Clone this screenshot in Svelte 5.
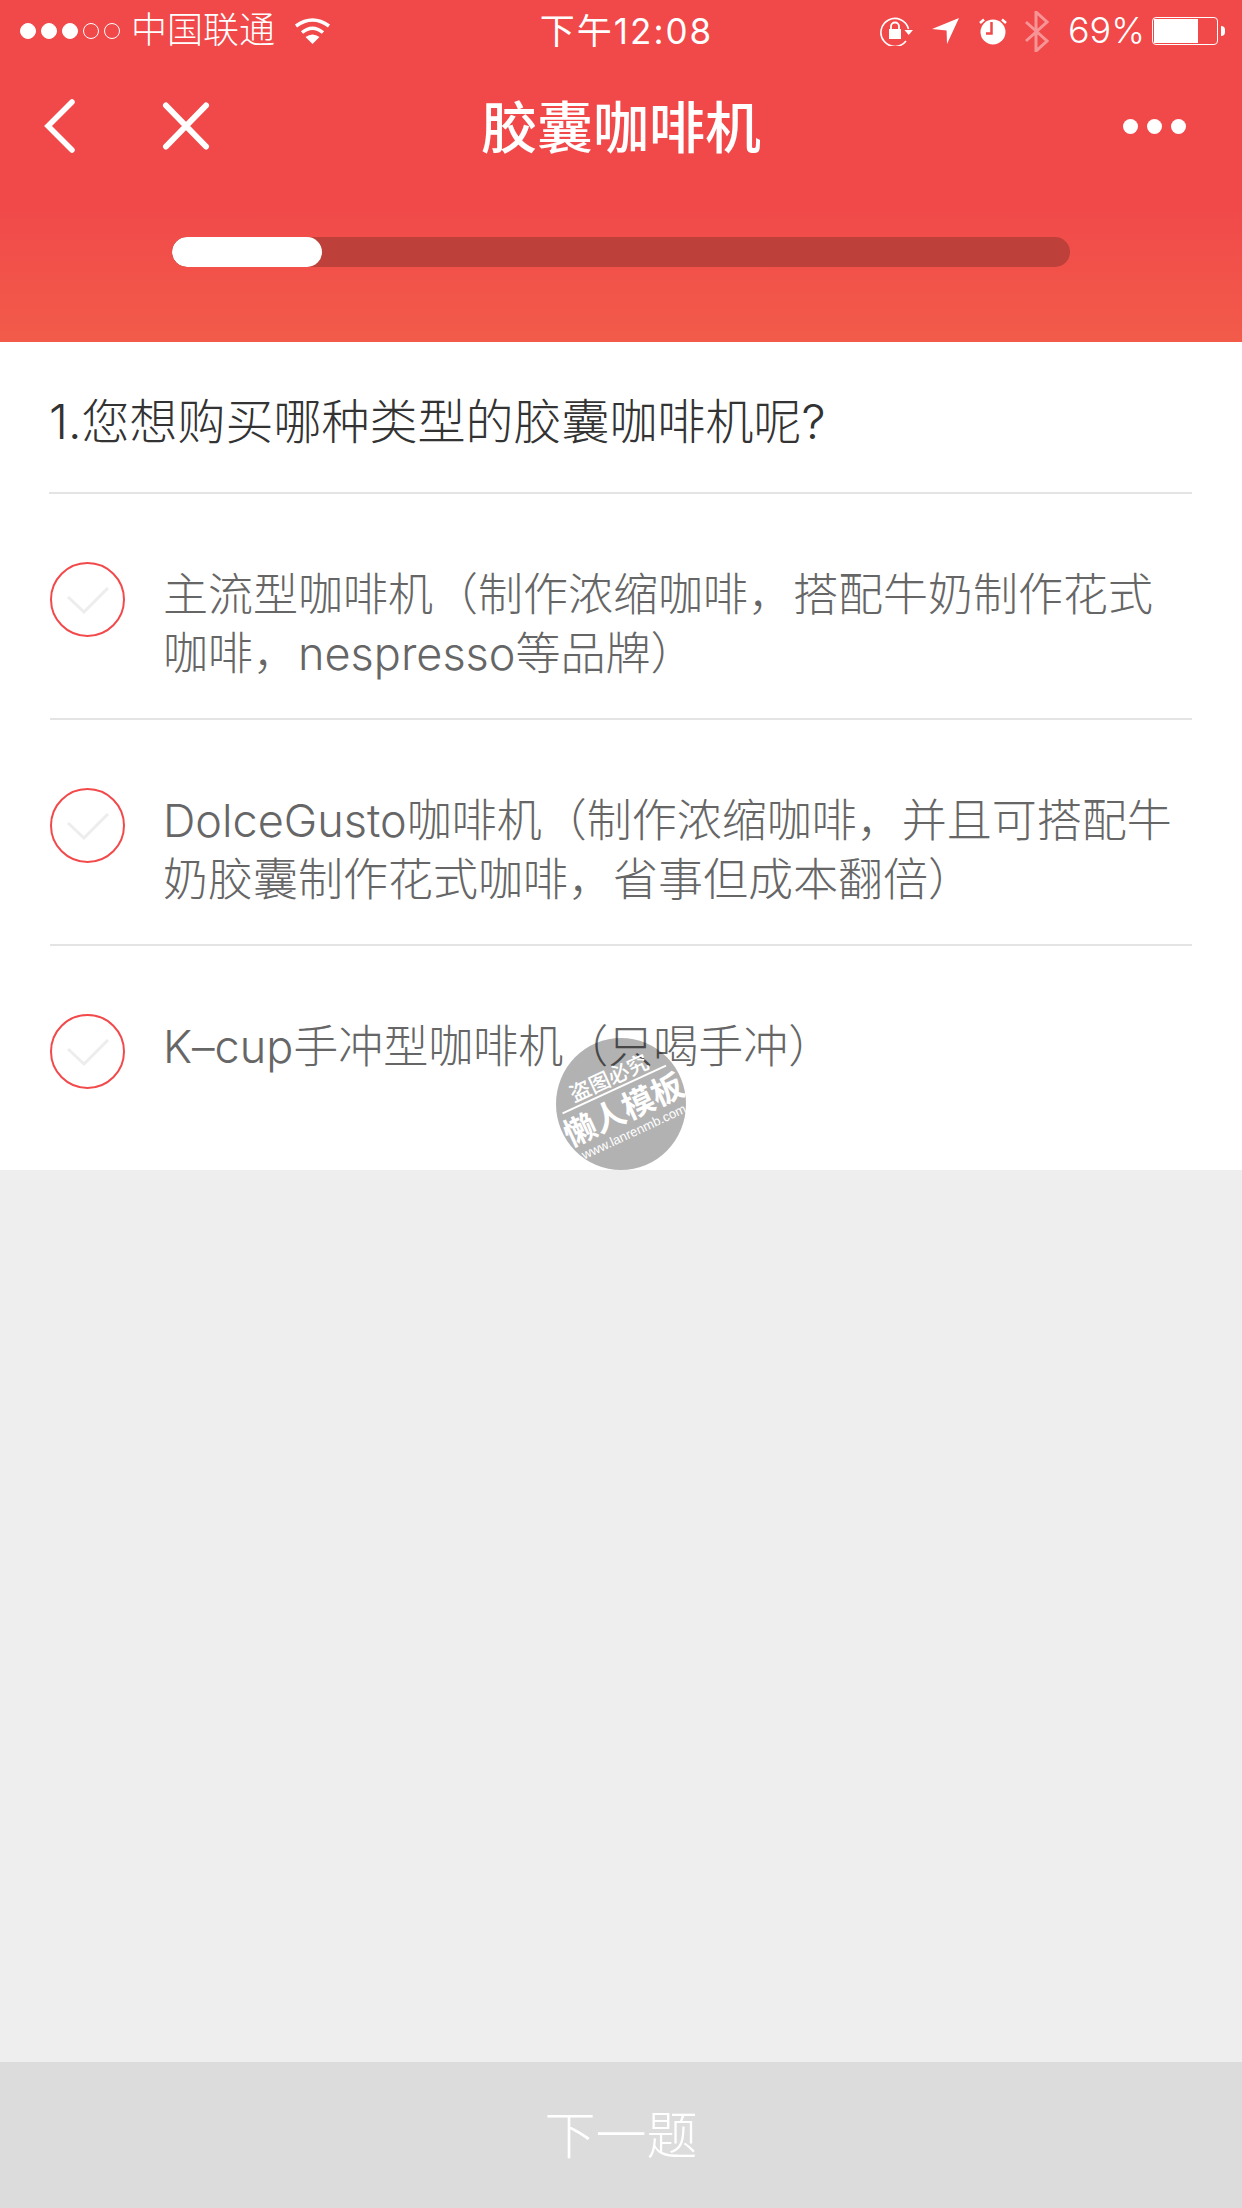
<script>
  const options = [
    '主流型咖啡机（制作浓缩咖啡，搭配牛奶制作花式咖啡，nespresso等品牌）',
    'DolceGusto咖啡机（制作浓缩咖啡，并且可搭配牛奶胶囊制作花式咖啡，省事但成本翻倍）',
    'K–cup手冲型咖啡机（只喝手冲）'
  ];
  const progress = 16.7;
</script>

<div class="page">
  <header class="top">
    <div class="status">
      <div class="carrier">
        <span class="signal">
          <i class="on"></i><i class="on"></i><i class="on"></i><i></i><i></i>
        </span>
        <span class="carrier-name">中国联通</span>
        <svg class="wifi" width="37" height="27" viewBox="0 0 37 27">
          <path d="M2 9Q18.500 -3 35 9" fill="none" stroke="#fff" stroke-width="3.500" />
          <path d="M8 15.500Q18.500 7 29 15.500" fill="none" stroke="#fff" stroke-width="3.500" />
          <path d="M18.500 27L11.500 20Q18.500 15 25.500 20Z" fill="#fff" />
        </svg>
      </div>
      <div class="clock">下午12:08</div>
      <div class="sys">
        <svg width="33" height="30" viewBox="0 0 33 30">
          <path d="M28.500 13A14 14 0 1 0 26 25" fill="none" stroke="#fff" stroke-width="1.600" />
          <path d="M24.500 14H33L28.700 19Z" fill="#fff" />
          <rect x="9" y="13" width="12" height="10" fill="#fff" />
          <path d="M11 14V10.500a4 4 0 0 1 8 0V14" fill="none" stroke="#fff" stroke-width="1.800" />
        </svg>
        <svg class="gap" width="27" height="26" viewBox="0 0 27 26">
          <path d="M0 11L27 0L15 26L14.600 12.500Z" fill="#fff" />
        </svg>
        <svg class="gap" width="29" height="27" viewBox="0 0 29 27">
          <circle cx="15" cy="14" r="12.500" fill="#fff" />
          <path d="M2 5L6 1.500M28 5L24 1.500" stroke="#fff" stroke-width="2.500" />
          <path d="M13.500 4V15.500H8" fill="none" stroke="#f1484a" stroke-width="2.500" />
        </svg>
        <svg class="gap-bt" width="24" height="41" viewBox="0 0 24 41">
          <path d="M1 11L22 30L11 40V1L22 11L1 30" fill="none" stroke="#fff" stroke-opacity=".42" stroke-width="3" />
        </svg>
        <span class="pct">69%</span>
        <span class="battery"><b></b></span>
        <span class="cap"></span>
      </div>
    </div>

    <nav class="bar">
      <div class="nav-left">
        <svg width="34" height="54" viewBox="0 0 34 54">
          <path d="M29 3L5 27L29 51" fill="none" stroke="#fff" stroke-width="5.500" stroke-linecap="round" />
        </svg>
        <svg class="close" width="48" height="48" viewBox="0 0 48 48">
          <path d="M4 3.500L44 44.500M44 3.500L4 44.500" fill="none" stroke="#fff" stroke-width="6" stroke-linecap="round" />
        </svg>
      </div>
      <h1>胶囊咖啡机</h1>
      <div class="more"><i></i><i></i><i></i></div>
    </nav>

    <div class="track">
      <div class="fill" style="width: {progress}%"></div>
    </div>
  </header>

  <main>
    <section class="survey">
      <h2>1.您想购买哪种类型的胶囊咖啡机呢?</h2>
      {#each options as option}
        <div class="option">
          <span class="check">
            <svg width="42" height="28" viewBox="0 0 42 28">
              <path d="M1 10L17 25L41 1" fill="none" stroke="#eeecec" stroke-width="3" />
            </svg>
          </span>
          <p>{option}</p>
        </div>
      {/each}
    </section>

    <div class="stamp">
      <div class="stamp-in">
        <span class="s1">盗图必究</span>
        <span class="s2">懒人模板</span>
        <span class="s3">www.lanrenmb.com</span>
      </div>
    </div>
  </main>

  <footer>下一题</footer>
</div>

<style>
  :global(body) {
    margin: 0;
    background: #eeeeee;
  }

  .page {
    width: 1242px;
    height: 2208px;
    display: flex;
    flex-direction: column;
    font-family: "Noto Sans CJK SC", sans-serif;
    font-weight: 300;
    background: #eeeeee;
  }

  .top {
    height: 342px;
    flex: none;
    color: #fff;
    background: linear-gradient(#f1484a 0, #f1484a 200px, #f25b49 342px);
  }

  .status {
    height: 62px;
    box-sizing: border-box;
    display: grid;
    grid-template-columns: 1fr auto 1fr;
    align-items: center;
    padding: 0 17px 0 20px;
    font-size: 36px;
  }

  .carrier,
  .sys {
    display: flex;
    align-items: center;
  }

  .sys {
    justify-content: flex-end;
  }

  .signal {
    display: flex;
    gap: 5px;
    margin-right: 11px;
  }

  .signal i {
    width: 16px;
    height: 16px;
    box-sizing: border-box;
    border: 1px solid #fff;
    border-radius: 50%;
  }

  .signal i.on {
    background: #fff;
  }

  .carrier-name {
    line-height: 50px;
    margin-bottom: 8px;
  }

  .wifi {
    margin-left: 19px;
    margin-bottom: 2px;
  }

  .clock {
    margin: 0 0 6px 8px;
    font-family: "Inter", "Noto Sans CJK SC", sans-serif;
    font-weight: 400;
    font-size: 35px;
    letter-spacing: 2px;
  }

  .sys svg {
    flex: none;
  }

  .gap {
    margin-left: 19px;
  }

  .gap-bt {
    margin-left: 18px;
  }

  .pct {
    margin: 0 0 2px 19px;
    font-family: "Inter", sans-serif;
    font-size: 36px;
  }

  .battery {
    width: 66px;
    height: 28px;
    box-sizing: border-box;
    margin-left: 7px;
    padding: 1px;
    border: 1px solid #fff;
    border-radius: 4px;
  }

  .battery b {
    display: block;
    width: 44px;
    height: 100%;
    background: #fff;
  }

  .cap {
    width: 4px;
    height: 10px;
    margin-left: 3px;
    background: #fff;
    border-radius: 0 4px 4px 0;
  }

  .bar {
    height: 126px;
    box-sizing: border-box;
    display: grid;
    grid-template-columns: 1fr auto 1fr;
    align-items: center;
    padding: 2px 56px 0 43px;
  }

  .nav-left {
    display: flex;
    align-items: center;
  }

  .close {
    margin-left: 85px;
  }

  h1 {
    margin: 0 0 6px 13px;
    font-size: 56px;
    font-weight: 500;
  }

  .more {
    display: flex;
    gap: 9px;
    justify-self: end;
  }

  .more i {
    width: 15px;
    height: 15px;
    background: #fff;
    border-radius: 50%;
  }

  .track {
    width: 898px;
    height: 30px;
    margin: 49px auto 0;
    border-radius: 15px;
    background: #bd403a;
    overflow: hidden;
  }

  .fill {
    height: 100%;
    background: #fff;
    border-radius: 15px;
  }

  main {
    flex: 1;
    position: relative;
  }

  .survey {
    height: 828px;
    box-sizing: border-box;
    padding: 0 50px;
    background: #fff;
  }

  h2 {
    height: 152px;
    box-sizing: border-box;
    margin: 0 0 0 -1px;
    line-height: 160px;
    border-bottom: 2px solid #e4e4e4;
    color: #333;
    font-family: "Inter", "Noto Sans CJK SC", sans-serif;
    font-size: 48px;
    font-weight: 300;
    white-space: nowrap;
  }

  .option {
    height: 226px;
    box-sizing: border-box;
    display: flex;
    gap: 38px;
    padding-top: 68px;
    border-bottom: 2px solid #e4e4e4;
  }

  .option:last-child {
    border-bottom: 0;
  }

  .check {
    flex: none;
    width: 75px;
    height: 75px;
    box-sizing: border-box;
    display: flex;
    align-items: center;
    justify-content: center;
    border: 2px solid #f2494b;
    border-radius: 50%;
  }

  .check svg {
    margin-top: 2px;
  }

  p {
    margin: 3px 0 0;
    width: 1029px;
    flex: none;
    color: #666;
    font-family: "Inter", "Noto Sans CJK SC", sans-serif;
    font-size: 45px;
    line-height: 59px;
  }

  .stamp {
    position: absolute;
    left: 556px;
    top: 696px;
    width: 130px;
    height: 132px;
    border-radius: 50%;
    background: rgba(0, 0, 0, 0.3);
    color: #fff;
  }

  .stamp-in {
    height: 100%;
    box-sizing: border-box;
    padding-bottom: 4px;
    display: flex;
    flex-direction: column;
    align-items: center;
    justify-content: center;
    transform: rotate(-24.8deg);
    white-space: nowrap;
  }

  .s1 {
    width: 114px;
    text-align: center;
    font-size: 21px;
    line-height: 26px;
    font-weight: 500;
    border-bottom: 2px solid #fff;
  }

  .s2 {
    font-size: 32px;
    line-height: 38px;
    font-weight: 700;
  }

  .s3 {
    font-family: "Liberation Sans", sans-serif;
    font-size: 13px;
    line-height: 16px;
  }

  footer {
    height: 146px;
    flex: none;
    box-sizing: border-box;
    padding-bottom: 6px;
    display: flex;
    align-items: center;
    justify-content: center;
    background: #dcdcdc;
    color: #fff;
    font-size: 51px;
  }
</style>
